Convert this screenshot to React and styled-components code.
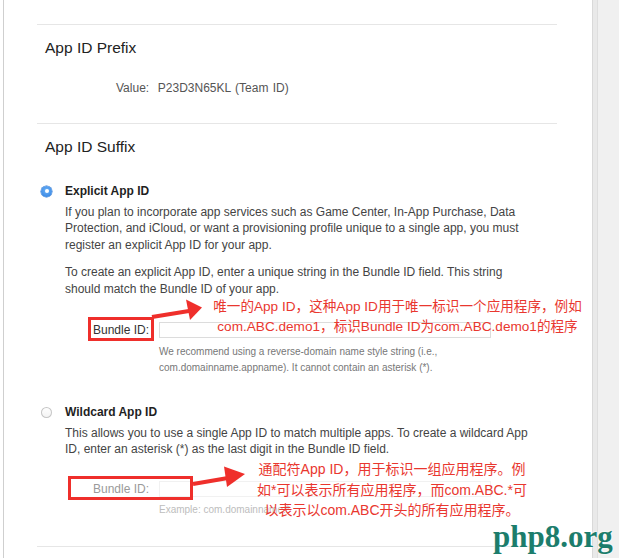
import React from "react";
import styled, { createGlobalStyle } from "styled-components";

const GlobalStyle = createGlobalStyle`
  html, body { margin: 0; padding: 0; background: #fff; }
  body { font-family: "Liberation Sans", Arial, sans-serif; }
  * { box-sizing: border-box; }
`;

const Page = styled.div`
  position: relative;
  display: flex;
  width: 619px;
  height: 558px;
  overflow: hidden;
  background: #fff;
`;

const Main = styled.div`
  width: 589px;
  margin-left: 3px;
  border-left: 1px solid #cfcfcf;
  padding: 24px 0 0 33px;
  background: #fff;
`;

const Sidebar = styled.div`
  flex: 1;
  border-left: 1px solid #d9d9d9;
  background: linear-gradient(to right, #e9e9e9 0 4px, #dedede 4px 5px, #f0f0f0 5px);
`;

const Content = styled.div`
  width: 520px;
`;

const Section = styled.section`
  border-top: 1px solid #e6e6e6;
  padding: 12px 0 ${(p) => p.$pb || 0}px 8px;
`;

const Heading = styled.h2`
  margin: 0;
  font-size: 15.5px;
  line-height: 21px;
  font-weight: normal;
  color: #222;
`;

const ValueRow = styled.div`
  margin: 22px 0 0 71px;
  font-size: 12px;
  line-height: 16px;
  color: #555;
  word-spacing: 1px;
`;

const Option = styled.div`
  display: grid;
  grid-template-columns: 11px 1fr;
  column-gap: 13px;
  margin: ${(p) => p.$mt}px 0 0 -4px;
`;

const Radio = styled.span`
  width: 11px;
  height: 11px;
  margin-top: 2.5px;
  border-radius: 50%;
  position: relative;
  ${(p) =>
    p.$checked
      ? `background: radial-gradient(circle at 50% 40%, #6cb2f7, #2d7ddf);
         box-shadow: 0 0 0 0.5px #2a72cc;`
      : `background: linear-gradient(#fff, #f2f2f2);
         box-shadow: inset 0 0 0 1px #c6c6c6;`}
  &::after {
    content: "";
    display: ${(p) => (p.$checked ? "block" : "none")};
    position: absolute;
    left: 3.5px;
    top: 3.5px;
    width: 4px;
    height: 4px;
    border-radius: 50%;
    background: #fff;
  }
`;

const OptionBody = styled.div``;

const OptionTitle = styled.div`
  font-size: 12px;
  line-height: 16px;
  font-weight: bold;
  color: #1f1f1f;
`;

const Desc = styled.p`
  margin: ${(p) => p.$mt}px 0 0;
  font-size: 12px;
  line-height: 16.5px;
  color: #444;
  white-space: nowrap;
`;

const FieldRow = styled.div`
  display: grid;
  grid-template-columns: 84px 332px;
  column-gap: 10px;
  align-items: center;
  margin-top: ${(p) => p.$mt}px;
`;

const FieldLabel = styled.label`
  justify-self: end;
  font-size: 12px;
  line-height: 16px;
  color: ${(p) => (p.$disabled ? "#9a9a9a" : "#333")};
`;

const TextInput = styled.div`
  height: 16px;
  border: 1px solid ${(p) => (p.$disabled ? "#f1f1f1" : "#dcdcdc")};
  background: #fff;
`;

const Hint = styled.p`
  margin: ${(p) => p.$mt}px 0 0 94px;
  font-size: 10px;
  line-height: 16.5px;
  color: ${(p) => (p.$light ? "#bdbdbd" : "#777")};
  white-space: nowrap;
`;

const RedBox = styled.div`
  position: absolute;
  border: 3px solid #ef2f2b;
  left: ${(p) => p.$x}px;
  top: ${(p) => p.$y}px;
  width: ${(p) => p.$w}px;
  height: ${(p) => p.$h}px;
`;

const Note = styled.div`
  position: absolute;
  left: ${(p) => p.$x}px;
  top: ${(p) => p.$y}px;
  width: ${(p) => p.$w}px;
  text-align: center;
  font-family: "Liberation Sans", "Noto Sans CJK SC", sans-serif;
  font-size: ${(p) => p.$fs}px;
  line-height: ${(p) => p.$lh}px;
  color: #e9372f;
  white-space: nowrap;
`;

const Arrows = styled.svg`
  position: absolute;
  left: 0;
  top: 0;
  pointer-events: none;
`;

const Watermark = styled.div`
  position: absolute;
  left: 493px;
  top: 521px;
  font-family: "Liberation Serif", "Times New Roman", serif;
  font-weight: bold;
  font-size: 31px;
  line-height: 1;
  color: #1c7d6c;
  text-shadow: 0 0 2px #fff, 0 0 2px #fff;
`;

export default function App() {
  return (
    <>
      <GlobalStyle />
      <Page>
        <Main>
          <Content>
            <Section $pb={27}>
              <Heading>App ID Prefix</Heading>
              <ValueRow>Value:&nbsp; P23D3N65KL (Team ID)</ValueRow>
            </Section>
            <Section $pb={28}>
              <Heading>App ID Suffix</Heading>
              <Option $mt={26}>
                <Radio $checked />
                <OptionBody>
                  <OptionTitle>Explicit App ID</OptionTitle>
                  <Desc $mt={4.5}>
                    If you plan to incorporate app services such as Game Center, In-App Purchase, Data
                    <br />
                    Protection, and iCloud, or want a provisioning profile unique to a single app, you must
                    <br />
                    register an explicit App ID for your app.
                  </Desc>
                  <Desc $mt={11}>
                    To create an explicit App ID, enter a unique string in the Bundle ID field. This string
                    <br />
                    should match the Bundle ID of your app.
                  </Desc>
                  <FieldRow $mt={25}>
                    <FieldLabel>Bundle ID:</FieldLabel>
                    <TextInput />
                  </FieldRow>
                  <Hint $mt={5.5}>
                    We recommend using a reverse-domain name style string (i.e.,
                    <br />
                    com.domainname.appname). It cannot contain an asterisk (*).
                  </Hint>
                </OptionBody>
              </Option>
              <Option $mt={27.5}>
                <Radio />
                <OptionBody>
                  <OptionTitle>Wildcard App ID</OptionTitle>
                  <Desc $mt={4.5}>
                    This allows you to use a single App ID to match multiple apps. To create a wildcard App
                    <br />
                    ID, enter an asterisk (*) as the last digit in the Bundle ID field.
                  </Desc>
                  <FieldRow $mt={23}>
                    <FieldLabel $disabled>Bundle ID:</FieldLabel>
                    <TextInput $disabled />
                  </FieldRow>
                  <Hint $mt={5} $light>
                    Example: com.domainname.*
                  </Hint>
                </OptionBody>
              </Option>
            </Section>
            <Section />
          </Content>
        </Main>
        <Sidebar />

        <RedBox $x={88} $y={317} $w={66} $h={24} />
        <RedBox $x={68} $y={476} $w={125} $h={24} />
        <Arrows width="619" height="558" viewBox="0 0 619 558">
          <line x1="152" y1="317" x2="192" y2="310.5" stroke="#ef2f2b" strokeWidth="4" />
          <polygon points="186,299.5 202,307.5 190,320" fill="#ef2f2b" />
          <line x1="193" y1="484" x2="228" y2="478" stroke="#ef2f2b" strokeWidth="4" />
          <polygon points="224,466.5 245,474 227,487" fill="#ef2f2b" />
        </Arrows>
        <Note $x={205} $y={297} $w={385} $lh={20} $fs={13.6}>
          唯一的App ID，这种App ID用于唯一标识一个应用程序，例如
          <br />
          com.ABC.demo1，标识Bundle ID为com.ABC.demo1的程序
        </Note>
        <Note $x={247} $y={459} $w={290} $lh={20.5} $fs={14}>
          通配符App ID，用于标识一组应用程序。例
          <br />
          如*可以表示所有应用程序，而com.ABC.*可
          <br />
          以表示以com.ABC开头的所有应用程序。
        </Note>
        <Watermark>php8.org</Watermark>
      </Page>
    </>
  );
}
